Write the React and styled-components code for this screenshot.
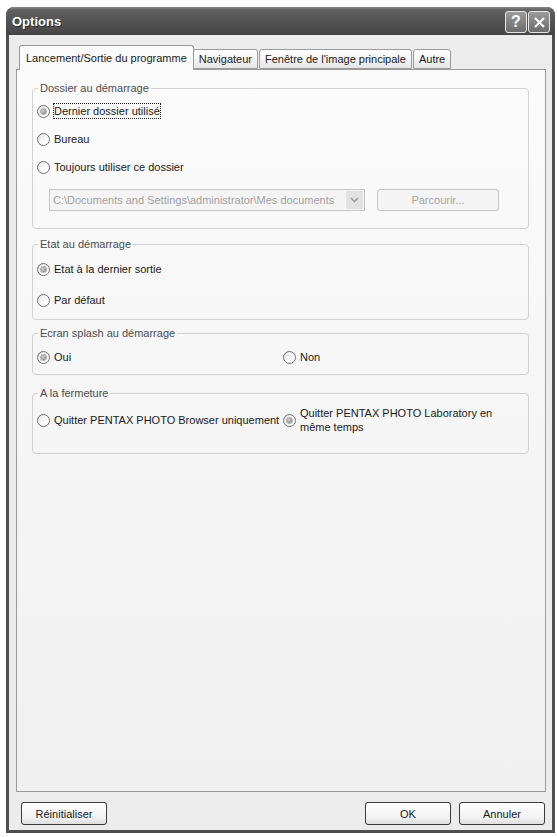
import React from "react";
import styled, { createGlobalStyle } from "styled-components";

const Global = createGlobalStyle`
  html, body {
    margin: 0;
    padding: 0;
    background: #ffffff;
  }
  body {
    font-family: "Liberation Sans", Arial, sans-serif;
    font-size: 11px;
    color: #1a1a1a;
  }
`;

const Page = styled.div`
  padding: 7px 2px 4px 6px;
`;

const Window = styled.div`
  width: 549px;
  height: 826px;
  display: flex;
  flex-direction: column;
  background: #4e4e4e;
  border-radius: 8px 8px 0 0;
  overflow: hidden;
`;

const TitleBar = styled.div`
  height: 28px;
  flex: none;
  display: flex;
  align-items: center;
  justify-content: space-between;
  padding: 0 5px 0 6px;
  background: linear-gradient(#8a8a8a 0px, #606060 3px, #555 12px, #4a4a4a 24px, #444 28px);
`;

const Title = styled.span`
  font-weight: bold;
  font-size: 13px;
  color: #fff;
  text-shadow: 1px 1px 0 #2a2a2a;
  padding-top: 1px;
`;

const TitleButtons = styled.div`
  display: flex;
  gap: 1px;
  margin-top: 2px;
`;

const CaptionButton = styled.div`
  width: 20px;
  height: 20px;
  border: 1px solid #e6e6e6;
  border-radius: 3px;
  background: linear-gradient(#9a9a9a, #6c6c6c);
  display: flex;
  align-items: center;
  justify-content: center;
  color: #fff;
  font-weight: bold;
  font-size: 16px;
  line-height: 1;
`;

const Body = styled.div`
  flex: 1;
  margin: 0 3px 3px 3px;
  background: #ececec;
  display: flex;
  flex-direction: column;
  padding: 10px 6px 5px 7px;
  min-height: 0;
`;

const Tabs = styled.div`
  display: flex;
  align-items: flex-end;
  height: 24px;
  padding-left: 3px;
  position: relative;
  z-index: 1;
`;

const Tab = styled.div`
  height: ${(p) => (p.$active ? "25px" : "20px")};
  margin-bottom: ${(p) => (p.$active ? "-1px" : "0")};
  margin-right: ${(p) => (p.$active ? "-1px" : "1px")};
  padding: 0 ${(p) => (p.$active ? "6px" : "5px")};
  display: flex;
  align-items: center;
  border: 1px solid #9a9a9a;
  border-bottom: ${(p) => (p.$active ? "none" : "1px solid #9a9a9a")};
  border-radius: 3px 3px 0 0;
  background: ${(p) =>
    p.$active ? "#fbfbfb" : "linear-gradient(#ffffff, #f2f2f2 60%, #e6e6e6)"};
  box-sizing: border-box;
  white-space: nowrap;
`;

const Panel = styled.div`
  flex: 1;
  border: 1px solid #9a9a9a;
  background: linear-gradient(#fbfbfb, #f4f4f4 60%, #f0f0f0);
  padding: 12px 16px 0 15px;
  min-height: 0;
`;

const Group = styled.fieldset`
  margin: ${(p) => p.$top || 0}px 0 0 0;
  border: 1px solid #d2d2d2;
  border-radius: 4px;
  padding: ${(p) => p.$pt}px 4px ${(p) => p.$pb}px 4px;
  min-inline-size: auto;
`;

const Legend = styled.legend`
  padding: 0 2px;
  margin-left: 1px;
  font-size: 11px;
  line-height: 13px;
  color: #4c4c4c;
`;

const Stack = styled.div`
  display: flex;
  flex-direction: column;
  gap: ${(p) => p.$gap}px;
`;

const Columns = styled.div`
  display: grid;
  grid-template-columns: 246px 1fr;
  align-items: center;
`;

const Radio = styled.label`
  display: flex;
  align-items: center;
  min-height: 16px;
  line-height: 14px;
`;

const Circle = styled.span`
  flex: none;
  width: 11px;
  height: 11px;
  border: 1px solid #6e6e6e;
  border-radius: 50%;
  background: linear-gradient(135deg, #e2e2e2, #ffffff 70%);
  display: flex;
  align-items: center;
  justify-content: center;

  &::after {
    content: "";
    display: ${(p) => (p.$checked ? "block" : "none")};
    width: 5px;
    height: 5px;
    border-radius: 50%;
    background: radial-gradient(circle at 40% 40%, #d8d8d8, #8a8a8a 70%);
    box-shadow: 0 0 0 1px #b4b4b4;
  }
`;

const RadioText = styled.span`
  margin-left: 4px;
  max-width: ${(p) => (p.$max ? `${p.$max}px` : "none")};
  outline: ${(p) => (p.$focus ? "1px dotted #222" : "none")};
  outline-offset: 0;
`;

const PathRow = styled.div`
  display: flex;
  align-items: center;
  margin: 14px 0 0 12px;
`;

const Combo = styled.div`
  width: 310px;
  height: 20px;
  border: 1px solid #c6c6c6;
  background: #f4f4f4;
  display: flex;
  align-items: center;
  justify-content: space-between;
  padding: 0 1px 0 3px;
  color: #a2a2a2;
`;

const ComboArrow = styled.div`
  width: 17px;
  height: 18px;
  background: #e2e2e2;
  border-radius: 2px;
  display: flex;
  align-items: center;
  justify-content: center;
`;

const DisabledButton = styled.div`
  margin-left: 12px;
  width: 120px;
  height: 20px;
  border: 1px solid #c4c4c4;
  border-radius: 3px;
  background: #f4f4f4;
  color: #a6a6a6;
  display: flex;
  align-items: center;
  justify-content: center;
`;

const Footer = styled.div`
  display: flex;
  align-items: center;
  margin-top: 10px;
  padding: 0 1px 0 5px;
  gap: 8px;
`;

const Button = styled.button`
  width: 86px;
  height: 23px;
  border: 1px solid #3a3a3a;
  border-radius: 3px;
  background: linear-gradient(#ffffff, #f2f2f2 70%, #dedede);
  font-family: "Liberation Sans", Arial, sans-serif;
  font-size: 11px;
  color: #1a1a1a;
  padding: 0;
  margin-left: ${(p) => (p.$push ? "auto" : "0")};
`;

const Option = ({ checked, focus, max, children }) => (
  <Radio>
    <Circle $checked={checked} />
    <RadioText $focus={focus} $max={max}>
      {children}
    </RadioText>
  </Radio>
);

export default function App() {
  return (
    <Page>
      <Global />
      <Window>
        <TitleBar>
          <Title>Options</Title>
          <TitleButtons>
            <CaptionButton>?</CaptionButton>
            <CaptionButton>
              <svg width="11" height="11" viewBox="0 0 11 11">
                <path d="M1 1 L10 10 M10 1 L1 10" stroke="#fff" strokeWidth="2" />
              </svg>
            </CaptionButton>
          </TitleButtons>
        </TitleBar>
        <Body>
          <Tabs>
            <Tab $active>Lancement/Sortie du programme</Tab>
            <Tab>Navigateur</Tab>
            <Tab>Fenêtre de l'image principale</Tab>
            <Tab>Autre</Tab>
          </Tabs>
          <Panel>
            <Group $pt={8} $pb={17}>
              <Legend>Dossier au démarrage</Legend>
              <Stack $gap={12}>
                <Option checked focus>
                  Dernier dossier utilisé
                </Option>
                <Option>Bureau</Option>
                <Option>Toujours utiliser ce dossier</Option>
              </Stack>
              <PathRow>
                <Combo>
                  <span>C:\Documents and Settings\administrator\Mes documents</span>
                  <ComboArrow>
                    <svg width="9" height="6" viewBox="0 0 9 6">
                      <path d="M1 1 L4.5 4.5 L8 1" stroke="#9a9a9a" strokeWidth="1.6" fill="none" />
                    </svg>
                  </ComboArrow>
                </Combo>
                <DisabledButton>Parcourir...</DisabledButton>
              </PathRow>
            </Group>

            <Group $top={9} $pt={10} $pb={11}>
              <Legend>Etat au démarrage</Legend>
              <Stack $gap={15}>
                <Option checked>Etat à la dernier sortie</Option>
                <Option>Par défaut</Option>
              </Stack>
            </Group>

            <Group $top={7} $pt={9} $pb={9}>
              <Legend>Ecran splash au démarrage</Legend>
              <Columns>
                <Option checked>Oui</Option>
                <Option>Non</Option>
              </Columns>
            </Group>

            <Group $top={12} $pt={6} $pb={19}>
              <Legend>A la fermeture</Legend>
              <Columns>
                <Option>Quitter PENTAX PHOTO Browser uniquement</Option>
                <Option checked max={210}>
                  Quitter PENTAX PHOTO Laboratory en même temps
                </Option>
              </Columns>
            </Group>
          </Panel>
          <Footer>
            <Button>Réinitialiser</Button>
            <Button $push>OK</Button>
            <Button>Annuler</Button>
          </Footer>
        </Body>
      </Window>
    </Page>
  );
}
